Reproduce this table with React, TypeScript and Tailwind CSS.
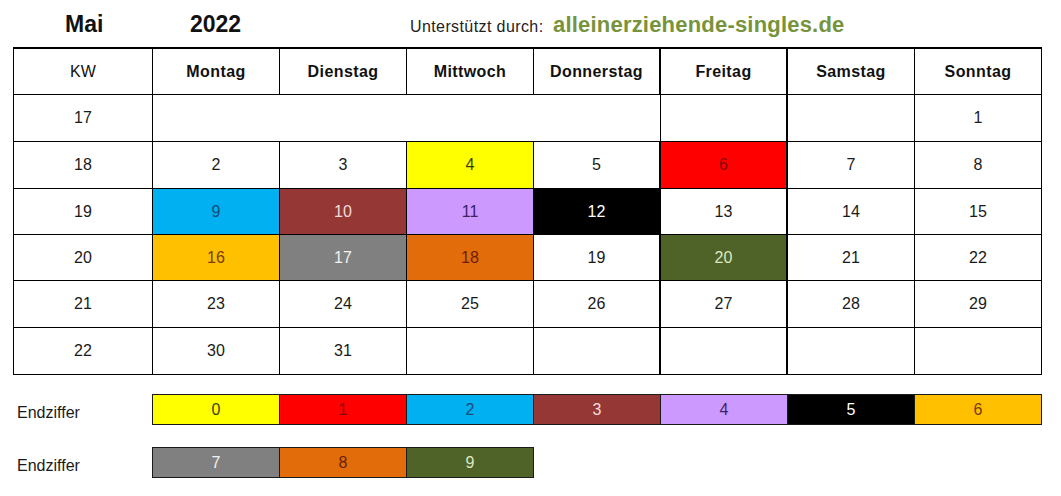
import React from 'react';

type Cell = {
  label?: string;
  bg?: string;
  fg?: string;
  span?: boolean;
};

// colours per last digit (Endziffer)
const digitColors: Record<number, { bg: string; fg: string }> = {
  0: { bg: 'bg-[#ffff00]', fg: 'text-[#3d3d00]' },
  1: { bg: 'bg-[#ff0000]', fg: 'text-[#8a0000]' },
  2: { bg: 'bg-[#00b0f0]', fg: 'text-[#1c4a78]' },
  3: { bg: 'bg-[#953735]', fg: 'text-[#f4dcdb]' },
  4: { bg: 'bg-[#cc99ff]', fg: 'text-[#3f2166]' },
  5: { bg: 'bg-[#000000]', fg: 'text-white' },
  6: { bg: 'bg-[#ffc000]', fg: 'text-[#7a3c06]' },
  7: { bg: 'bg-[#808080]', fg: 'text-[#f2f2f2]' },
  8: { bg: 'bg-[#e26b0a]', fg: 'text-[#6b1f08]' },
  9: { bg: 'bg-[#4f6228]', fg: 'text-[#dbe8c2]' },
};

const colored: Record<number, number> = {
  4: 0,
  6: 1,
  9: 2,
  10: 3,
  11: 4,
  12: 5,
  16: 6,
  17: 7,
  18: 8,
  20: 9,
};

const days = ['Montag', 'Dienstag', 'Mittwoch', 'Donnerstag', 'Freitag', 'Samstag', 'Sonntag'];

const day = (n?: number): Cell => {
  if (n === undefined) return {};
  const d = colored[n];
  if (d === undefined) return { label: String(n) };
  return { label: String(n), ...digitColors[d] };
};

const weeks: { kw: number; cells: Cell[]; h: string }[] = [
  { kw: 17, cells: [{ span: true }, {}, {}, day(1)], h: 'h-[47px]' },
  { kw: 18, cells: [2, 3, 4, 5, 6, 7, 8].map(day), h: 'h-[47px]' },
  { kw: 19, cells: [9, 10, 11, 12, 13, 14, 15].map(day), h: 'h-[46px]' },
  { kw: 20, cells: [16, 17, 18, 19, 20, 21, 22].map(day), h: 'h-[46px]' },
  { kw: 21, cells: [23, 24, 25, 26, 27, 28, 29].map(day), h: 'h-[47px]' },
  { kw: 22, cells: [day(30), day(31), {}, {}, {}, {}, {}], h: 'h-[47px]' },
];

// Donnerstag / Freitag have the heavier column lines
const colBorder = (i: number) => (i === 3 || i === 4 ? 'border-r-2' : 'border-r');

const CalendarCell: React.FC<{ cell: Cell; col: number; h: string }> = ({ cell, col, h }) => (
  <div
    className={`${h} ${cell.span ? 'col-span-4 border-r' : colBorder(col)} border-b border-black flex items-center justify-center text-[16px] ${cell.bg ?? 'bg-white'} ${cell.fg ?? 'text-[#1a1a1a]'}`}
  >
    {cell.label}
  </div>
);

const Legend: React.FC<{ digits: number[] }> = ({ digits }) => (
  <div className="flex">
    <div className="w-[139px] pl-[4px] pt-[9px] text-[16px] leading-[20px] text-[#1a1a1a]">Endziffer</div>
    <div className="flex border-l border-y border-[#1a1a1a]">
      {digits.map((d) => (
        <div
          key={d}
          className={`w-[127px] h-[29px] border-r border-[#1a1a1a] flex items-center justify-center text-[16px] ${digitColors[d].bg} ${digitColors[d].fg}`}
        >
          {d}
        </div>
      ))}
    </div>
  </div>
);

export default function App() {
  return (
    <div className="w-[1061px] h-[496px] bg-white px-[13px] font-['Liberation_Sans',Arial,sans-serif] text-[#111]">
      {/* Title line */}
      <div className="h-[47px] flex items-baseline pt-[11px] leading-[26px]">
        <span className="w-[52px]" />
        <span className="w-[125px] text-[23px] font-bold">Mai</span>
        <span className="w-[220px] text-[23px] font-bold">2022</span>
        <span className="w-[143px] text-[16px] tracking-[0.4px] text-[#222]">Unterstützt durch:</span>
        <span className="text-[22px] font-bold text-[#77933c] tracking-[0.2px]">alleinerziehende-singles.de</span>
      </div>

      {/* Calendar */}
      <div className="w-[1029px] grid grid-cols-[139px_repeat(7,127px)] border-l border-t-2 border-black">
        <div className="h-[46px] border-r border-b border-black flex items-center justify-center text-[16px]">KW</div>
        {days.map((d, i) => (
          <div
            key={d}
            className={`h-[46px] ${colBorder(i)} border-b border-black flex items-center justify-center text-[16px] font-bold tracking-[0.4px]`}
          >
            {d}
          </div>
        ))}

        {weeks.map((w) => (
          <React.Fragment key={w.kw}>
            <div className={`${w.h} border-r border-b border-black flex items-center justify-center text-[16px] text-[#1a1a1a]`}>
              {w.kw}
            </div>
            {w.cells.map((c, i) => {
              // merged first cell of KW 17 covers Mo-Do
              const col = w.kw === 17 ? (i === 0 ? 3 : i + 3) : i;
              return <CalendarCell key={i} cell={c} col={col} h={w.h} />;
            })}
          </React.Fragment>
        ))}
      </div>

      {/* Endziffer legend */}
      <div className="mt-[19px] flex flex-col gap-[22px]">
        <Legend digits={[0, 1, 2, 3, 4, 5, 6]} />
        <Legend digits={[7, 8, 9]} />
      </div>
    </div>
  );
}
